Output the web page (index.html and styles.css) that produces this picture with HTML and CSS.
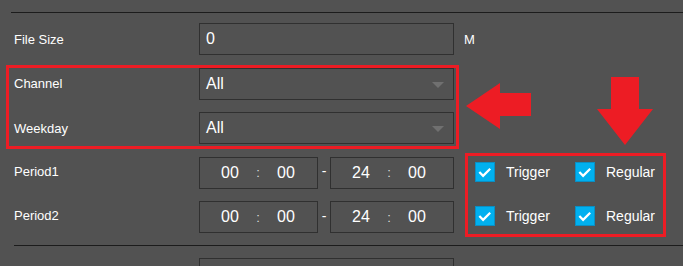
FILE: index.html
```html
<!DOCTYPE html>
<html lang="en">

<head>
    <meta charset="UTF-8">
    <meta name="viewport" content="width=device-width, initial-scale=1.0">
    <title>Record Search</title>
    <link rel="stylesheet" href="styles.css">
</head>

<body>
    <div class="form">
        <div class="sep"></div>

        <div class="row">
            <label class="lbl">File Size</label>
            <div class="field">0</div>
            <span class="unit">M</span>
        </div>

        <div class="row">
            <label class="lbl">Channel</label>
            <div class="field select">All<span class="caret"></span></div>
        </div>

        <div class="row">
            <label class="lbl">Weekday</label>
            <div class="field select">All<span class="caret"></span></div>
        </div>

        <div class="row">
            <label class="lbl lbl-up">Period1</label>
            <div class="time time-start"><span class="num">00</span><span class="colon">:</span><span class="num">00</span></div>
            <span class="dash">-</span>
            <div class="time time-end"><span class="num">24</span><span class="colon">:</span><span class="num">00</span></div>
            <div class="checks">
                <span class="check"><span class="box"><svg viewBox="0 0 19 19"><polyline points="3.5,9.5 7.5,13.5 15,6" /></svg></span>Trigger</span>
                <span class="check"><span class="box"><svg viewBox="0 0 19 19"><polyline points="3.5,9.5 7.5,13.5 15,6" /></svg></span>Regular</span>
            </div>
        </div>

        <div class="row">
            <label class="lbl lbl-up">Period2</label>
            <div class="time time-start"><span class="num">00</span><span class="colon">:</span><span class="num">00</span></div>
            <span class="dash">-</span>
            <div class="time time-end"><span class="num">24</span><span class="colon">:</span><span class="num">00</span></div>
            <div class="checks">
                <span class="check"><span class="box"><svg viewBox="0 0 19 19"><polyline points="3.5,9.5 7.5,13.5 15,6" /></svg></span>Trigger</span>
                <span class="check"><span class="box"><svg viewBox="0 0 19 19"><polyline points="3.5,9.5 7.5,13.5 15,6" /></svg></span>Regular</span>
            </div>
        </div>

        <div class="sep sep-bottom"></div>

        <div class="row">
            <label class="lbl"></label>
            <div class="field"></div>
        </div>
    </div>

    <!-- annotations -->
    <div class="mark mark-select"></div>
    <div class="mark mark-checks"></div>
    <svg class="arrow arrow-left" viewBox="0 0 66 47">
        <polygon points="0,23 34,0 34,10 65,10 65,33 34,33 34,46" />
    </svg>
    <svg class="arrow arrow-down" viewBox="0 0 57 69">
        <polygon points="14,0 42,0 42,32 56,32 28,68 0,32 14,32" />
    </svg>
</body>

</html>
```

FILE: styles.css
```css
html, body {
    margin: 0;
    height: 100%;
    overflow: hidden;
}

body {
    background-color: #525252;
    color: #fff;
    font-family: "Liberation Sans", Arial, sans-serif;
    position: relative;
}

.form {
    padding: 12px 0 0 14px;
}

.sep {
    height: 1px;
    background-color: #1c1c1c;
    margin: 0 0 3.75px -3px;
}

.sep-bottom {
    margin: 6px 0 5px 0;
}

.row {
    display: flex;
    align-items: center;
    height: 44.5px;
}

.lbl {
    width: 185px;
    flex-shrink: 0;
    font-size: 13px;
}

.lbl-up {
    margin-top: -3px;
}

.field {
    box-sizing: border-box;
    width: 255px;
    height: 32px;
    border: 1px solid #303030;
    padding-left: 6px;
    font-size: 16px;
    line-height: 30px;
    position: relative;
}

.caret {
    position: absolute;
    right: 9px;
    top: 13px;
    border-left: 6px solid transparent;
    border-right: 6px solid transparent;
    border-top: 6px solid #707070;
}

.unit {
    margin-left: 10px;
    font-size: 13px;
}

.time {
    box-sizing: border-box;
    height: 32px;
    border: 1px solid #303030;
    display: flex;
    align-items: center;
    padding-left: 12px;
    font-size: 16px;
}

.time-start {
    width: 119px;
}

.time-end {
    width: 124px;
}

.num {
    width: 36px;
    text-align: center;
}

.colon {
    width: 20px;
    text-align: center;
    font-size: 13px;
    color: #ddd;
}

.dash {
    width: 12px;
    text-align: center;
    font-size: 14px;
    margin-top: -3px;
}

.checks {
    display: flex;
    margin-left: 21px;
    margin-top: -2px;
}

.check {
    display: flex;
    align-items: center;
    width: 100px;
    font-size: 14px;
}

.box {
    box-sizing: border-box;
    width: 20px;
    height: 20px;
    background-color: #00b0ef;
    border: 1px solid #0a8fc4;
    margin-right: 11px;
    display: flex;
}

.box svg {
    width: 100%;
    height: 100%;
}

.box polyline {
    fill: none;
    stroke: #fff;
    stroke-width: 2.4;
}

.mark {
    position: absolute;
    box-sizing: border-box;
    border: 3px solid #ed1c24;
}

.mark-select {
    left: 6px;
    top: 65px;
    width: 453px;
    height: 84px;
}

.mark-checks {
    left: 465px;
    top: 153px;
    width: 201px;
    height: 84px;
}

.arrow {
    position: absolute;
    fill: #ed1c24;
}

.arrow-left {
    left: 466px;
    top: 83px;
    width: 66px;
    height: 47px;
}

.arrow-down {
    left: 597px;
    top: 77px;
    width: 57px;
    height: 69px;
}
```
